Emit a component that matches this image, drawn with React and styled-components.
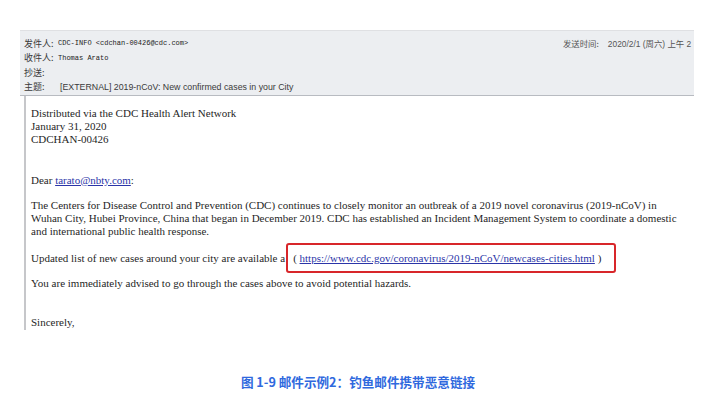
import React from "react";
import styled, { createGlobalStyle } from "styled-components";

const GlobalStyle = createGlobalStyle`
  html, body {
    margin: 0;
    padding: 0;
    background: #ffffff;
  }
`;

const Page = styled.div`
  width: 716px;
  height: 403px;
  overflow: hidden;
  padding-top: 30px;
  box-sizing: border-box;
`;

const Shot = styled.div`
  margin-left: 20px;
  width: 674px;
  height: 300px;
  overflow: hidden;
`;

const Header = styled.div`
  height: 66px;
  box-sizing: border-box;
  background: #eceef1;
  border-top: 1px solid #dfe0e3;
  border-bottom: 1px solid #b8bbc1;
  padding: 5px 0 0 4px;
  overflow: hidden;
`;

const HeaderRow = styled.div`
  display: grid;
  grid-template-columns: 34px ${(p) => (p.$wide ? "505px auto" : "1fr")};
  align-items: center;
  height: 14.5px;
  white-space: nowrap;
`;

const Label = styled.span`
  font-family: "Noto Sans CJK SC", sans-serif;
  font-size: 9px;
  color: #3b3b3b;
`;

const MonoValue = styled.span`
  font-family: "Liberation Mono", monospace;
  font-size: 7px;
  color: #222;
`;

const Subject = styled.span`
  font-family: "Liberation Sans", "Noto Sans CJK SC", sans-serif;
  font-size: 8.8px;
  color: #3a3a3a;
  padding-left: 2px;
`;

const Sent = styled.span`
  font-family: "Liberation Sans", "Noto Sans CJK SC", sans-serif;
  font-size: 8.4px;
  color: #555;

  b {
    font-weight: normal;
    font-family: "Noto Sans CJK SC", sans-serif;
    margin-right: 9px;
  }
`;

const Body = styled.div`
  margin-left: 4px;
  height: 234px;
  box-sizing: border-box;
  border-left: 2px solid #c6c7ca;
  background: #fff;
  padding: 11px 0 0 5px;
  font-family: "Liberation Serif", serif;
  font-size: 11px;
  line-height: 13px;
  color: #1f1f1f;
`;

const Para = styled.p`
  margin: ${(p) => p.$top || 0}px 0 0 0;
  white-space: nowrap;
`;

const Link = styled.a`
  color: #2b35a8;
  text-decoration: underline;
`;

const Highlight = styled.span`
  border: 2px solid #d8262a;
  border-radius: 3px;
  padding: 7px 13px 7px 5px;
  margin-left: 1px;
`;

const Caption = styled.div`
  margin-top: 42px;
  text-align: center;
  font-family: "Noto Sans CJK SC", sans-serif;
  font-size: 12.6px;
  font-weight: 700;
  color: #2f69de;
`;

export default function App() {
  return (
    <Page>
      <GlobalStyle />
      <Shot>
        <Header>
          <HeaderRow $wide>
            <Label>发件人:</Label>
            <MonoValue>CDC-INFO &lt;cdchan-00426@cdc.com&gt;</MonoValue>
            <Sent>
              <b>发送时间:</b>2020/2/1 (周六) 上午 2
            </Sent>
          </HeaderRow>
          <HeaderRow>
            <Label>收件人:</Label>
            <MonoValue>Thomas Arato</MonoValue>
          </HeaderRow>
          <HeaderRow>
            <Label>抄送:</Label>
          </HeaderRow>
          <HeaderRow>
            <Label>主题:</Label>
            <Subject>[EXTERNAL] 2019-nCoV: New confirmed cases in your City</Subject>
          </HeaderRow>
        </Header>
        <Body>
          <Para>Distributed via the CDC Health Alert Network</Para>
          <Para>January 31, 2020</Para>
          <Para>CDCHAN-00426</Para>
          <Para $top={28}>
            Dear <Link>tarato@nbty.com</Link>:
          </Para>
          <Para $top={12}>
            The Centers for Disease Control and Prevention (CDC) continues to closely monitor an outbreak of a 2019 novel coronavirus (2019-nCoV) in
            <br />
            Wuhan City, Hubei Province, China that began in December 2019. CDC has established an Incident Management System to coordinate a domestic
            <br />
            and international public health response.
          </Para>
          <Para $top={14}>
            Updated list of new cases around your city are available a
            <Highlight>
              ( <Link>https://www.cdc.gov/coronavirus/2019-nCoV/newcases-cities.html</Link> )
            </Highlight>
          </Para>
          <Para $top={12}>
            You are immediately advised to go through the cases above to avoid potential hazards.
          </Para>
          <Para $top={26}>Sincerely,</Para>
        </Body>
      </Shot>
      <Caption>图 1-9 邮件示例2：钓鱼邮件携带恶意链接</Caption>
    </Page>
  );
}
